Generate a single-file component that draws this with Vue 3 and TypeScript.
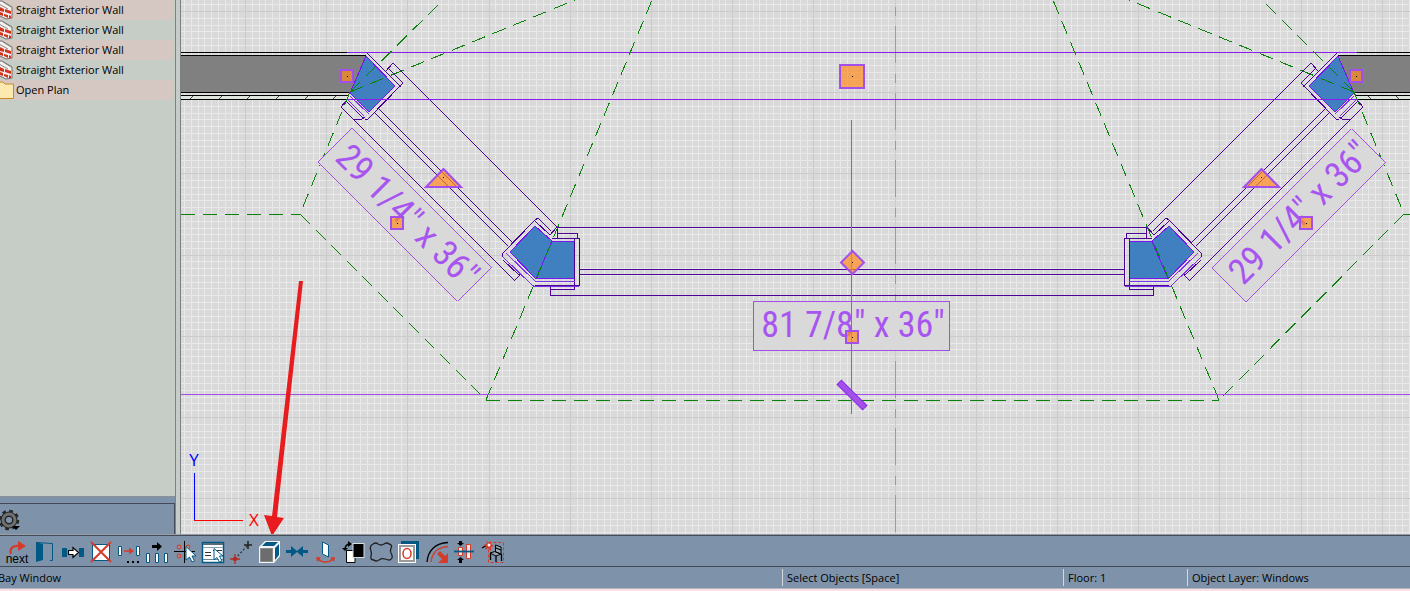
<script setup lang="ts">
interface TreeItem {
  id: number
  label: string
  kind: 'wall' | 'folder'
}

const items: TreeItem[] = [
  { id: 1, label: 'Straight Exterior Wall', kind: 'wall' },
  { id: 2, label: 'Straight Exterior Wall', kind: 'wall' },
  { id: 3, label: 'Straight Exterior Wall', kind: 'wall' },
  { id: 4, label: 'Straight Exterior Wall', kind: 'wall' },
  { id: 5, label: 'Open Plan', kind: 'folder' },
]

// One foot on the plan, divided into twelve inches.
const FOOT = 81.2
const INCH = FOOT / 12

function gridLines(origin: number, from: number, to: number, step: number): number[] {
  const first = Math.ceil((from - origin) / step)
  const last = Math.floor((to - origin) / step)
  const out: number[] = []
  for (let i = first; i <= last; i++) out.push(Math.round(origin + i * step))
  return out
}

const minorX = gridLines(245, 181, 1410, INCH)
const minorY = gridLines(11, 0, 534, INCH)
const majorX = gridLines(245, 181, 1410, FOOT)
const majorY = gridLines(11, 0, 534, FOOT)

const minorPath = minorX.map((x) => `M${x} 0h1v534h-1z`).join('') + minorY.map((y) => `M181 ${y}h1229v1h-1229z`).join('')
const majorPath = majorX.map((x) => `M${x} 0h1v534h-1z`).join('') + majorY.map((y) => `M181 ${y}h1229v1h-1229z`).join('')

const handles = [
  { x: 347, y: 76 },
  { x: 1356, y: 76 },
  { x: 397, y: 223 },
  { x: 1306, y: 223 },
  { x: 852, y: 337 },
]

const sides = [
  { id: 'left', transform: '' },
  { id: 'right', transform: 'translate(1704 0) scale(-1 1)' },
]
</script>

<template>
  <div class="app">
    <main class="workspace">
      <aside class="browser">
        <ul class="tree">
          <li v-for="item in items" :key="item.id" class="tree-row">
            <svg v-if="item.kind === 'wall'" class="tree-icon" viewBox="0 0 14 20" aria-hidden="true">
              <path d="M-4 1L2 1L12 7V18L6 19L-4 14Z" fill="#f4f1ee" stroke="#6d6d6d" />
              <path d="M-1 4L8 9M3 2L11 7" stroke="#8b8b8b" fill="none" />
              <path d="M0 7l4 2v3l-4-1zM5 9l6 2v3l-6-2zM0 12l3 1v3l-3-1zM4 14l4 1v3l-4-2zM9 15l2 1v2h-2z" fill="#d3321f" />
            </svg>
            <svg v-else class="tree-icon" viewBox="0 0 14 20" aria-hidden="true">
              <path d="M-4 2H3L5 4H13.500V18.500H-4Z" fill="#fbe9b0" stroke="#c98a25" />
            </svg>
            <span>{{ item.label }}</span>
          </li>
        </ul>
        <div class="browser-tools">
          <button class="gear" type="button" aria-label="Options">
            <svg viewBox="0 0 24 24" aria-hidden="true">
              <circle cx="11" cy="12" r="8.800" fill="none" stroke="#262626" stroke-width="3" stroke-dasharray="3.600 3.310" />
              <circle cx="11" cy="12" r="5.800" fill="none" stroke="#262626" stroke-width="5.500" />
              <circle cx="11" cy="12" r="6" fill="none" stroke="#707070" stroke-width="3" />
              <path d="M14 18H22L18 22Z" fill="#000" />
            </svg>
          </button>
        </div>
      </aside>

      <svg class="plan" viewBox="181 0 1229 534" role="img" aria-label="Floor plan with bay window">
        <rect x="181" y="0" width="1229" height="534" fill="#d9d9d9" />
        <g shape-rendering="crispEdges">
          <path :d="minorPath" fill="#e9e9e9" />
          <path :d="majorPath" fill="#cbcbcb" />
        </g>

        <g fill="none" shape-rendering="crispEdges">
          <path d="M895.500 -41V534" stroke="#16d3dc" stroke-dasharray="37 11 9 10" />

          <g v-for="side in sides" :key="side.id" :transform="side.transform">
            <path d="M150 56H366L350 92H150Z" fill="#808080" />
            <path d="M150 96H350V99H150Z" fill="#dfe5df" />
            <path d="M190 99l4-4M219 99l4-4M247 99l4-4M276 99l4-4M305 99l4-4M333 99l4-4" stroke="#444" />
            <path d="M150 52.500H348M150 55.500H366M150 92.500H350M150 95.500H349M150 99.500H348" stroke="#000" />

            <path d="M366 56L395 86L369 112L350 93Z" fill="#407fc0" stroke="#7a14ee" />
            <path d="M535 226L552 241L536 279L510 252Z" fill="#407fc0" stroke="#7a14ee" />
            <path d="M552 241.500H574.500V278.500H536Z" fill="#407fc0" stroke="#7a14ee" />

            <g stroke="#4b0096">
              <path d="M367 53L401 87M386 71L393 63M388 68L403 83L368 119H365" />
              <path d="M341 107L346 101L363 118M341 107L353 119H362L365 117" />
              <path d="M393 63L557 227M379 109L512 242M375 113L508 246M341 107L514 280" />
              <path d="M502 254L535 220L538 218L551 231M535 221L550 235L557 227M502 254L503 257M503 260L519 275L521 274L514 281" />
              <path d="M557.500 239V227.500H852M557.500 233.500H577.500V238M552 238.500H579.500V285.500H535M574.500 238V289.500H551M550.500 286V295.500H852M579.500 269.500H852M579.500 274.500H852" />
            </g>
            <g stroke="#7a33e8">
              <path d="M350 96L369 114M347 99L364 116M506 253L535 281H575M503 257L533 286H579" />
            </g>
          </g>

          <path d="M347 52.500H1357M347 99.500H1357" stroke="#8a1cf0" />

          <g stroke="#0b800b" stroke-dasharray="14 8">
            <path d="M181 214.500H301" />
            <path d="M350 92L300 214L486 400" />
            <path d="M350 92L443 0" />
            <path d="M350 92L575 0" />
            <path d="M486 400L652 0" />
            <path d="M486 400.500H1219" />
            <path d="M1354 92L1404 214L1219 400" />
            <path d="M1354 92L1262 0" />
            <path d="M1354 92L1129 0" />
            <path d="M1219 400L1053 0" />
            <path d="M1404 214.500H1410" />
          </g>

          <path d="M181 394.500H1410" stroke="#a24fec" />
        </g>

        <g class="labels">
          <rect x="753.500" y="301.500" width="196" height="49" class="label-box" />
          <text x="853" y="337">81 7/8" x 36"</text>
          <g transform="translate(405 215) rotate(45)">
            <rect x="-99" y="-24" width="197" height="48" class="label-box" />
            <text x="2" y="11">29 1/4" x 36"</text>
          </g>
          <g transform="translate(1299 215) rotate(-45)">
            <rect x="-99" y="-24" width="197" height="48" class="label-box" />
            <text x="2" y="11">29 1/4" x 36"</text>
          </g>
        </g>

        <path d="M851.500 120V414" stroke="#a24fec" />
        <rect x="-18" y="-3" width="36" height="6" transform="translate(852 395) rotate(45)" fill="#a24fec" stroke="#8424e0" />

        <g class="handles">
          <rect x="840" y="65" width="24" height="23" />
          <path d="M852.500 251L864 262.500L852.500 274L841 262.500Z" />
          <path d="M443.500 169L461 187H426Z" />
          <path d="M1261.500 169L1279 187H1244Z" />
          <rect v-for="h in handles" :key="`${h.x}-${h.y}`" :x="h.x - 6" :y="h.y - 6" width="12" height="12" />
        </g>
        <g fill="#000" shape-rendering="crispEdges">
          <rect x="852" y="76" width="1" height="1" />
          <rect x="852" y="262" width="1" height="1" />
          <rect x="443" y="177" width="1" height="1" />
          <rect x="1261" y="177" width="1" height="1" />
          <rect v-for="h in handles" :key="`${h.x}-${h.y}-dot`" :x="h.x" :y="h.y" width="1" height="1" />
        </g>

        <g class="axes">
          <path d="M194.500 473V520" stroke="#00f" />
          <path d="M194 520.500H243" stroke="#f00" />
          <text x="194" y="466" fill="#00f">Y</text>
          <text x="254" y="526" fill="#f00">X</text>
        </g>

        <path d="M299 281H303L277 517L284 518L272 536L264 515L272 516Z" fill="#e81c1e" />
      </svg>
    </main>

    <nav class="toolbar" aria-label="Edit tools">
      <button type="button" aria-label="Next">
        <svg viewBox="0 0 28 30">
          <path d="M8 18C6 12 11 9 16 10" fill="none" stroke="#d63a28" stroke-width="2.200" />
          <path d="M15 5L23 10L15 15Z" fill="#d63a28" />
          <text x="14" y="27" class="tool-text">next</text>
        </svg>
      </button>
      <button type="button" aria-label="Open object">
        <svg viewBox="0 0 28 30">
          <path d="M5 6L12 8V24L5 26Z" fill="#035985" />
          <path d="M5 6.500L21.500 7.500V24.500H19" fill="none" stroke="#035985" />
        </svg>
      </button>
      <button type="button" aria-label="Copy paste">
        <svg viewBox="0 0 28 30">
          <path d="M3 12H8V21H3ZM20 12H25V21H20Z" fill="#035985" />
          <path d="M9.500 14.500H14V11.500L19.500 16.500L14 21.500V18.500H9.500Z" fill="#fff" stroke="#000" stroke-width="1.200" />
        </svg>
      </button>
      <button type="button" aria-label="Delete">
        <svg viewBox="0 0 28 30">
          <rect x="5.500" y="8.500" width="17" height="16" fill="#fff" stroke="#035985" />
          <path d="M4 6L24 26M24 6L4 26" stroke="#d63a28" stroke-width="2" />
        </svg>
      </button>
      <button type="button" aria-label="Transform and replicate">
        <svg viewBox="0 0 28 30">
          <path d="M3.500 10.500H6.500V19.500H3.500ZM21.500 10.500H24.500V19.500H21.500Z" fill="#fff" stroke="#035985" />
          <path d="M9 15H16" stroke="#d63a28" stroke-width="1.500" />
          <path d="M14 11.500L19 15L14 18.500Z" fill="#d63a28" />
          <path d="M12 25h2v2h-2zM17 25h2v2h-2zM22 25h2v2h-2z" />
        </svg>
      </button>
      <button type="button" aria-label="Multiple copy">
        <svg viewBox="0 0 28 30">
          <path d="M9 9H14V6L19 10.500L14 15V12H9Z" />
          <path d="M3.500 17.500H6.500V26.500H3.500ZM12.500 17.500H15.500V26.500H12.500ZM21.500 17.500H24.500V26.500H21.500Z" fill="#fff" stroke="#035985" />
        </svg>
      </button>
      <button type="button" aria-label="Point to point">
        <svg viewBox="0 0 28 30">
          <g fill="#9fadbb" stroke="#c64b40" stroke-width="1.500"><circle cx="8" cy="11" r="1.700" /><circle cx="17" cy="11" r="1.700" /><circle cx="8" cy="20" r="1.700" /></g>
          <path d="M13.500 5V27M3 15.500H24" stroke="#000" />
          <path d="M15 10.500V24L18.500 21L21 26L23.500 25L21 20H25Z" fill="#fff" stroke="#035985" />
        </svg>
      </button>
      <button type="button" aria-label="Open specification">
        <svg viewBox="0 0 28 30">
          <rect x="3.500" y="6.500" width="21" height="20" fill="#fff" stroke="#035985" stroke-width="1.500" />
          <path d="M4 7H24V9H4Z" fill="#536b7b" />
          <path d="M4 11.500H24" stroke="#8ba3b3" />
          <path d="M6 16.500H12M6 19.500H12M14 14.500H23" stroke="#333" />
          <path d="M4 23.500H24" stroke="#68899b" />
          <path d="M15 12.500V24L18 21.500L20.500 26L23 25L20.500 20H24Z" fill="#fff" stroke="#035985" />
        </svg>
      </button>
      <button type="button" aria-label="Move by points">
        <svg viewBox="0 0 28 30">
          <path d="M8 23L20 10" fill="none" stroke="#333" stroke-width="1.300" stroke-dasharray="2 2" />
          <path d="M21 5V13M17 9H25" stroke="#222" stroke-width="1.500" />
          <path d="M8 18V28M3 23H13" stroke="#b52d27" stroke-width="1.300" />
          <circle cx="8" cy="23" r="2.300" fill="#b52d27" />
        </svg>
      </button>
      <button type="button" aria-label="Box">
        <svg viewBox="0 0 28 30">
          <path d="M4 11L10 5H25V20L19 27H4Z" fill="#f4f4f4" />
          <path d="M7 10L11 6H23L19 10Z" fill="#035985" />
          <path d="M20 12L24 8V19L20 24Z" fill="#035985" />
          <rect x="5.500" y="12.500" width="12" height="13" fill="#6d6d6d" stroke="#8b8b8b" />
        </svg>
      </button>
      <button type="button" aria-label="Center object">
        <svg viewBox="0 0 28 30">
          <path d="M3 14H8V10L14 15L20 10V14H25V17H20V21L14 16L8 21V17H3Z" fill="#035985" />
        </svg>
      </button>
      <button type="button" aria-label="Rotate">
        <svg viewBox="0 0 28 30">
          <path d="M11.500 6L17.500 9V21L11.500 18Z" fill="#fff" stroke="#035985" />
          <path d="M7 23C11 27 18 27 22 23" fill="none" stroke="#d63a28" stroke-width="1.500" />
          <path d="M5 21L10 21.500L6 26ZM24 21L19 21.500L23 26Z" fill="#d63a28" />
        </svg>
      </button>
      <button type="button" aria-label="Swap colors">
        <svg viewBox="0 0 28 30">
          <path d="M7.500 14.500H16V26.500H7.500Z" fill="#fff" stroke="#000" />
          <rect x="14" y="7.500" width="11" height="14" fill="#000" stroke="#ddd" />
          <path d="M6 14C6 10 8 8 11 8" fill="none" stroke="#000" stroke-width="1.500" />
          <path d="M3 12H9L6 15ZM9 5V11L13 8Z" />
        </svg>
      </button>
      <button type="button" aria-label="Revision cloud">
        <svg viewBox="0 0 28 30">
          <path d="M6 8Q9 6 11 8Q14 10 17 8Q20 6 22 8Q26 9 24 12Q23 15 24 17Q27 22 23 24Q20 24 18 23Q15 22 12 24Q9 26 7 24Q3 24 4 20Q5 17 4 15Q2 10 6 8Z" fill="none" stroke="#202020" stroke-width="1.300" />
        </svg>
      </button>
      <button type="button" aria-label="Make opening">
        <svg viewBox="0 0 28 30">
          <path d="M6 5H24V23H20V9H6Z" fill="#035985" />
          <rect x="3" y="8" width="18" height="19" fill="#fff" />
          <rect x="5" y="10" width="14" height="15" fill="#fff" stroke="#9a9a9a" stroke-width="2" />
          <ellipse cx="12" cy="17.500" rx="4" ry="5" fill="none" stroke="#d63a28" stroke-width="1.500" />
        </svg>
      </button>
      <button type="button" aria-label="Offset curve">
        <svg viewBox="0 0 28 30">
          <path d="M4 26C5 15 12 7 25 6.500" fill="none" stroke="#000" stroke-width="1.300" />
          <path d="M8 26C9 17 15 11 25 10.500" fill="none" stroke="#d63a28" stroke-width="1.400" />
          <path d="M14 18L17 15L22 20L25 17V27H15L19 23Z" fill="#d63a28" />
        </svg>
      </button>
      <button type="button" aria-label="Align on line">
        <svg viewBox="0 0 28 30">
          <path d="M7.500 11.500H11.500V19.500H7.500ZM15.500 8.500H19.500V22.500H15.500Z" fill="#e8ecef" stroke="#d63a28" />
          <path d="M3 15.500H23" stroke="#035985" stroke-width="1.800" />
          <path d="M9.500 10L6 7H8V5H11V7H13ZM9.500 21L13 24H11V27H8V24H6Z" />
        </svg>
      </button>
      <button type="button" aria-label="Reset library object">
        <svg viewBox="0 0 28 30">
          <path d="M9.500 6.500H24.500V26.500H9.500Z" fill="none" stroke="#d63a28" stroke-dasharray="3 2" />
          <path d="M16.500 9L22 11V18L16.500 16ZM11 17L16 15.500L22 18L17 20Z" fill="#9ba9b5" stroke="#000" />
          <path d="M11.500 17V24M17 20V26M22.500 18V25M17 12L22 14" stroke="#000" stroke-width="1.300" />
          <path d="M3 12L8 9" stroke="#000" stroke-width="1.300" />
          <path d="M7 4L9 7L12 5L12 8L15 10L12 11L12 15L9 12L6 14L7 10L4 9L8 8Z" fill="#d63a28" />
          <circle cx="10" cy="9" r="1.500" fill="#fff" />
        </svg>
      </button>
    </nav>

    <footer class="status">
      <span class="cell current">Bay Window</span>
      <span class="cell mode">Select Objects [Space]</span>
      <span class="cell floor">Floor: 1</span>
      <span class="cell layer">Object Layer: Windows</span>
    </footer>
  </div>
</template>

<style>
body {
  margin: 0;
  background: #fbe3ea;
}
</style>

<style scoped>
.app {
  font-family: "Open Sans", "Noto Sans", sans-serif;
  font-size: 11px;
  color: #000;
  overflow: hidden;
  border-bottom: 2px solid #fbdfe8;
}

.workspace {
  display: flex;
  align-items: stretch;
  background: #c6ccc6;
  border-bottom: 1px solid #9b9fa3;
}

.browser {
  flex: none;
  box-sizing: border-box;
  width: 176px;
  margin-right: 4px;
  display: flex;
  flex-direction: column;
  border-right: 1px solid #7e8288;
}

.tree {
  flex: 1;
  margin: 0;
  padding: 0;
  list-style: none;
  border-bottom: 1px solid #8b9096;
}

.tree-row {
  display: flex;
  align-items: center;
  gap: 2px;
  height: 20px;
  margin-right: 1px;
  line-height: 22px;
}

.tree-row:nth-child(odd) {
  background: #d5c8c3;
}

.tree-icon {
  width: 14px;
  height: 20px;
  flex: none;
}

.browser-tools {
  height: 31px;
  border-top: 6px solid #7e93aa;
  background: #7e93aa;
  box-shadow: inset 0 1px #434b5a, inset -1px 0 #434b5a;
}

.gear {
  display: block;
  margin: 0 0 0 -2px;
  padding: 5px 0 0;
  border: 0;
  background: none;
}

.gear svg {
  display: block;
  width: 24px;
  height: 24px;
}

.plan {
  display: block;
  flex: 1;
  min-width: 0;
  height: auto;
  border-left: 1px solid #7e8288;
}

.label-box {
  fill: #d9d9d9;
  stroke: #a24fec;
  shape-rendering: crispEdges;
}

.labels text {
  font-family: "Roboto Condensed", "Liberation Sans Narrow", Roboto, sans-serif;
  font-size: 36px;
  fill: #a855f0;
  text-anchor: middle;
}

.handles {
  fill: #ff8c1e;
  fill-opacity: 0.7;
  stroke: #a24fec;
  stroke-width: 2px;
}

.axes text {
  font-family: "Open Sans", sans-serif;
  font-size: 17px;
  text-anchor: middle;
}

.toolbar {
  display: flex;
  height: 30px;
  padding-left: 3px;
  background: #7e93aa;
  border-top: 1px solid #434b5a;
}

.toolbar button {
  width: 28px;
  height: 30px;
  padding: 0;
  border: 0;
  background: none;
}

.toolbar svg {
  display: block;
  width: 28px;
  height: 30px;
}

.tool-text {
  font-size: 12px;
  text-anchor: middle;
}

.status {
  display: flex;
  align-items: center;
  height: 21px;
  background: #7e93aa;
  border-top: 1px solid #434b5a;
  border-bottom: 1px solid #b5b5bd;
}

.cell {
  box-sizing: border-box;
  height: 17px;
  padding-left: 4px;
  line-height: 18px;
  border-left: 1px solid #d5d9dd;
  white-space: nowrap;
}

.current {
  flex: 1;
  margin-left: -7px;
}

.mode {
  width: 281px;
}

.floor {
  width: 124px;
}

.layer {
  width: 223px;
}
</style>
